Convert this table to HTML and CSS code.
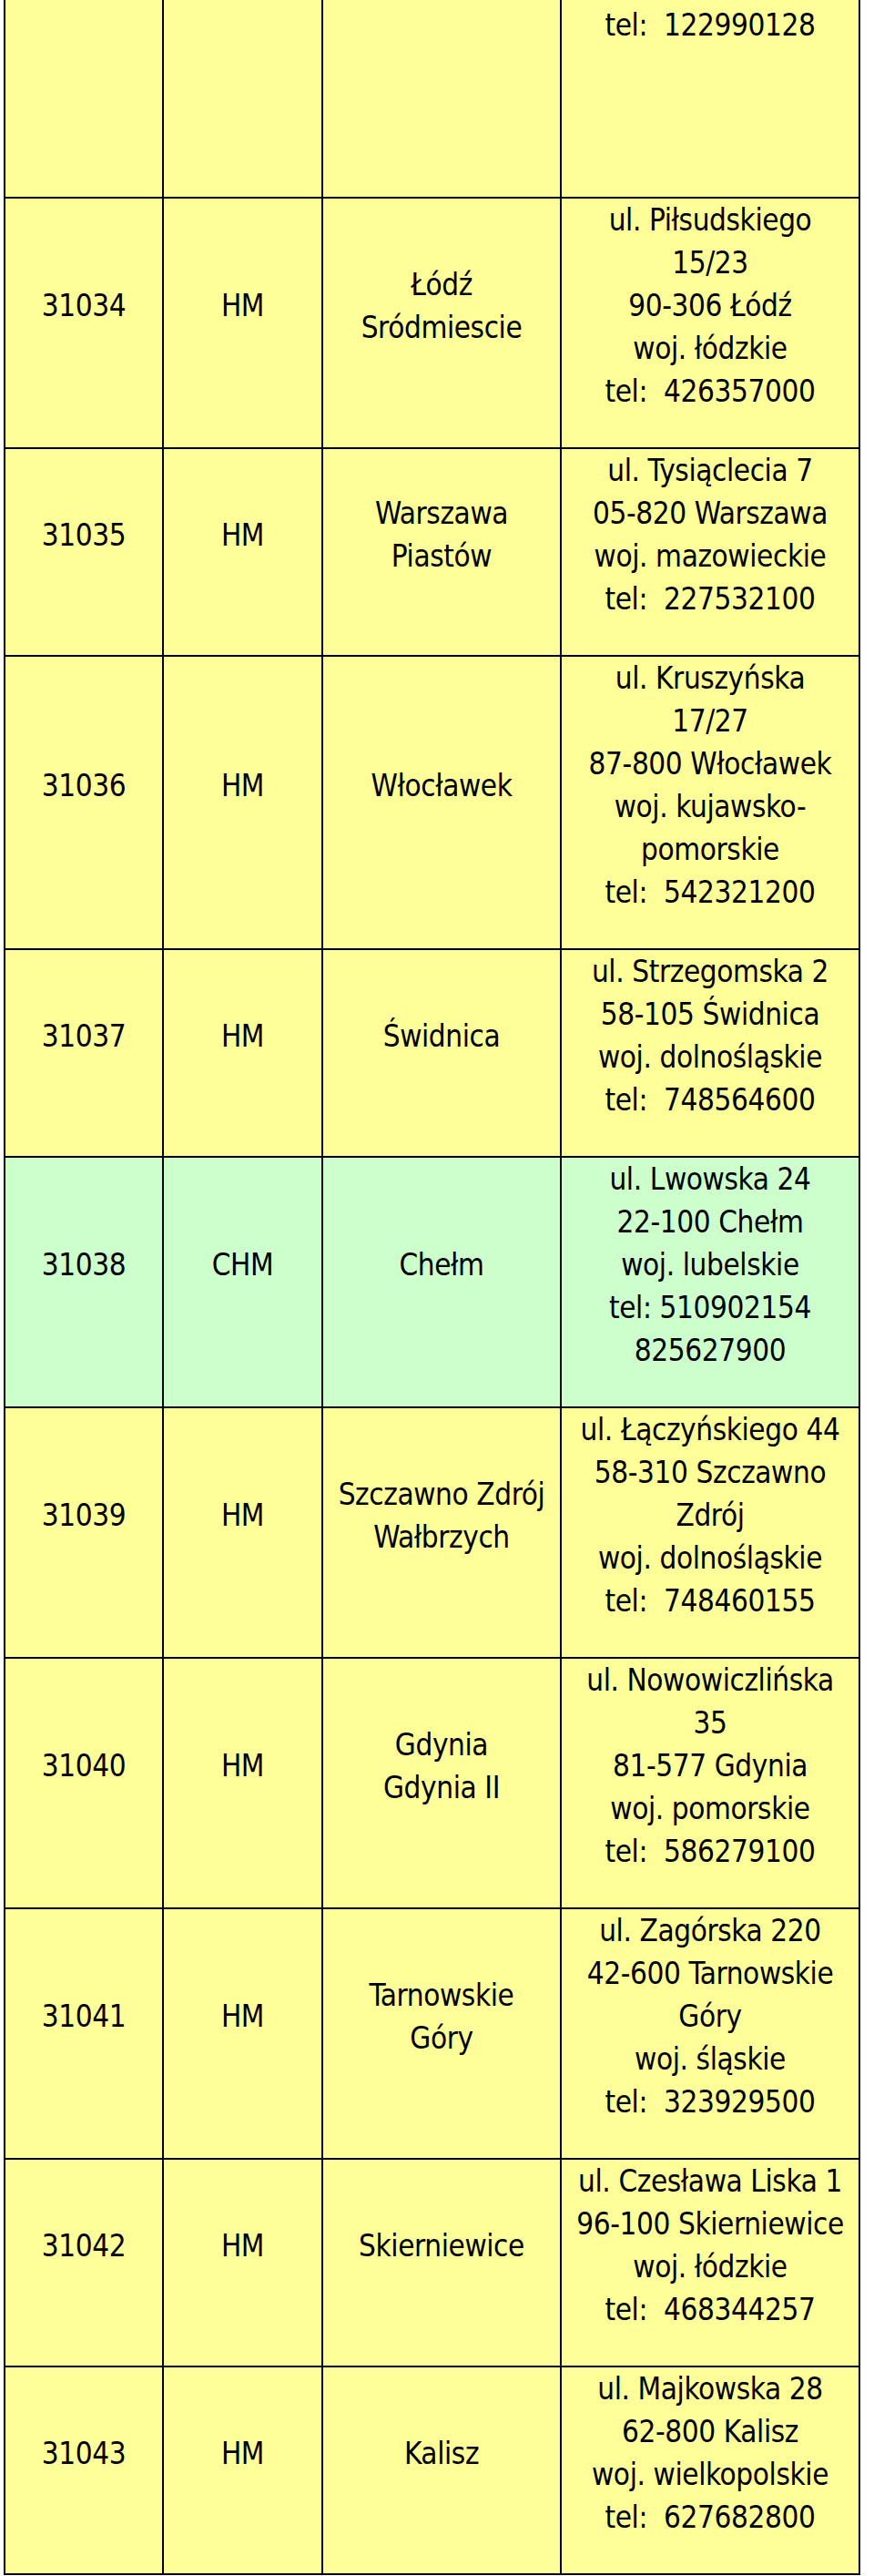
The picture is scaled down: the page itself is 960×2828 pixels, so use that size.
FILE: index.html
```html
<!DOCTYPE html>
<html lang="pl">
<head>
<meta charset="utf-8">
<title>Oddziały</title>
<link rel="stylesheet" href="styles.css">
</head>
<body>
<div class="sheet">
  <div class="cell cut"></div>
  <div class="cell cut"></div>
  <div class="cell cut"></div>
  <div class="cell cut top">tel:&nbsp; 122990128</div>

  <div class="cell">31034</div>
  <div class="cell">HM</div>
  <div class="cell">Łódź<br>Sródmiescie</div>
  <div class="cell">ul. Piłsudskiego<br>15/23<br>90-306 Łódź<br>woj. łódzkie<br>tel:&nbsp; 426357000</div>

  <div class="cell">31035</div>
  <div class="cell">HM</div>
  <div class="cell">Warszawa<br>Piastów</div>
  <div class="cell">ul. Tysiąclecia 7<br>05-820 Warszawa<br>woj. mazowieckie<br>tel:&nbsp; 227532100</div>

  <div class="cell">31036</div>
  <div class="cell">HM</div>
  <div class="cell">Włocławek</div>
  <div class="cell">ul. Kruszyńska<br>17/27<br>87-800 Włocławek<br>woj. kujawsko-<br>pomorskie<br>tel:&nbsp; 542321200</div>

  <div class="cell">31037</div>
  <div class="cell">HM</div>
  <div class="cell">Świdnica</div>
  <div class="cell">ul. Strzegomska 2<br>58-105 Świdnica<br>woj. dolnośląskie<br>tel:&nbsp; 748564600</div>

  <div class="cell green">31038</div>
  <div class="cell green">CHM</div>
  <div class="cell green">Chełm</div>
  <div class="cell green">ul. Lwowska 24<br>22-100 Chełm<br>woj. lubelskie<br>tel: 510902154<br>825627900</div>

  <div class="cell">31039</div>
  <div class="cell">HM</div>
  <div class="cell">Szczawno Zdrój<br>Wałbrzych</div>
  <div class="cell">ul. Łączyńskiego 44<br>58-310 Szczawno<br>Zdrój<br>woj. dolnośląskie<br>tel:&nbsp; 748460155</div>

  <div class="cell">31040</div>
  <div class="cell">HM</div>
  <div class="cell">Gdynia<br>Gdynia II</div>
  <div class="cell">ul. Nowowiczlińska<br>35<br>81-577 Gdynia<br>woj. pomorskie<br>tel:&nbsp; 586279100</div>

  <div class="cell">31041</div>
  <div class="cell">HM</div>
  <div class="cell">Tarnowskie<br>Góry</div>
  <div class="cell">ul. Zagórska 220<br>42-600 Tarnowskie<br>Góry<br>woj. śląskie<br>tel:&nbsp; 323929500</div>

  <div class="cell">31042</div>
  <div class="cell">HM</div>
  <div class="cell">Skierniewice</div>
  <div class="cell">ul. Czesława Liska 1<br>96-100 Skierniewice<br>woj. łódzkie<br>tel:&nbsp; 468344257</div>

  <div class="cell">31043</div>
  <div class="cell">HM</div>
  <div class="cell">Kalisz</div>
  <div class="cell">ul. Majkowska 28<br>62-800 Kalisz<br>woj. wielkopolskie<br>tel:&nbsp; 627682800</div>
</div>
</body>
</html>
```

FILE: styles.css
```css
html, body {
  margin: 0;
  padding: 0;
  background: #ffffff;
}

.sheet {
  display: grid;
  grid-template-columns: 172px 173px 260px 326px;
  gap: 2px;
  width: max-content;
  margin-left: 4px;
  padding: 0 2px 2px 2px;
  background: #000000;
}

.cell {
  box-sizing: border-box;
  display: flex;
  align-items: center;
  justify-content: center;
  text-align: center;
  padding: 0 2px 38px;
  background: #ffff99;
  color: #000000;
  font-family: "DejaVu Sans Condensed", "DejaVu Sans", sans-serif;
  font-stretch: condensed;
  font-size: 33px;
  letter-spacing: -0.4px;
  line-height: 47px;
  white-space: nowrap;
}

.cell.green {
  background: #ccffcc;
}

.cell.cut {
  height: 216px;
  padding: 0;
}

.cell.top {
  align-items: flex-start;
  padding-top: 4px;
}
```
